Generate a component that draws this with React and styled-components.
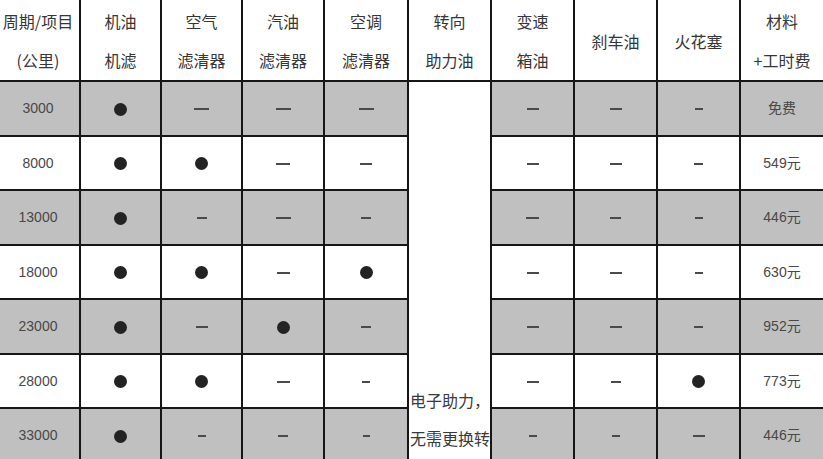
import React from "react";
import styled, { createGlobalStyle } from "styled-components";

const GlobalStyle = createGlobalStyle`
	html, body {
		margin: 0;
		padding: 0;
		background: #ffffff;
		overflow: hidden;
	}
`;

// column widths, border to border (first one runs off the left edge)
const columns = [84, 81, 81, 82, 84, 83, 83, 83, 83, 84];

const headers = [
	["周期/项目", "(公里)"],
	["机油", "机滤"],
	["空气", "滤清器"],
	["汽油", "滤清器"],
	["空调", "滤清器"],
	["转向", "助力油"],
	["变速", "箱油"],
	["刹车油"],
	["火花塞"],
	["材料", "+工时费"],
];

// "o" = dot, a number = dash width in px; the steering column is merged
const rows = [
	{ km: "3000", cells: ["o", 15, 15, 15, 12, 12, 8], price: "免费" },
	{ km: "8000", cells: ["o", "o", 14, 12, 12, 12, 9], price: "549元" },
	{ km: "13000", cells: ["o", 10, 15, 10, 13, 11, 8], price: "446元" },
	{ km: "18000", cells: ["o", "o", 13, "o", 12, 12, 8], price: "630元" },
	{ km: "23000", cells: ["o", 12, "o", 10, 12, 12, 9], price: "952元" },
	{ km: "28000", cells: ["o", "o", 13, 8, 12, 10, "o"], price: "773元" },
	{ km: "33000", cells: ["o", 8, 10, 7, 8, 8, 12], price: "446元" },
];

const Mark = ({ value }) =>
	value === "o" ? <Dot /> : <Dash $w={value} />;

const App = () => {
	return (
		<>
			<GlobalStyle />
			<Frame>
				<Table>
					<colgroup>
						{columns.map((w, i) => (
							<col key={i} style={{ width: w }} />
						))}
					</colgroup>
					<thead>
						<tr>
							{headers.map((lines, i) => (
								<HeadCell key={i}>
									{lines.map((t) => (
										<HeadLine key={t}>{t}</HeadLine>
									))}
								</HeadCell>
							))}
						</tr>
					</thead>
					<tbody>
						{rows.map((row, r) => {
							const shaded = r % 2 === 0;
							const before = row.cells.slice(0, 4);
							const after = row.cells.slice(4);
							return (
								<Row key={row.km}>
									<Cell $shaded={shaded}>
										<Num>{row.km}</Num>
									</Cell>
									{before.map((v, i) => (
										<Cell key={"b" + i} $shaded={shaded}>
											<Mark value={v} />
										</Cell>
									))}
									{r === 0 && (
										<MergedCell rowSpan={rows.length + 1}>
											电子助力，无需更换转向助力油
										</MergedCell>
									)}
									{after.map((v, i) => (
										<Cell key={"a" + i} $shaded={shaded}>
											<Mark value={v} />
										</Cell>
									))}
									<Cell $shaded={shaded}>
										<Num>{row.price}</Num>
									</Cell>
								</Row>
							);
						})}
						{/* the table goes on below the crop */}
						<Row>
							{Array.from({ length: 9 }).map((_, i) => (
								<Cell key={i} $shaded={false} />
							))}
						</Row>
					</tbody>
				</Table>
			</Frame>
		</>
	);
};

export default App;

// ====================== STYLED COMPONENTS ======================

const Frame = styled.div`
	width: 823px;
	height: 459px;
	overflow: hidden;
	background: #ffffff;
`;

const Table = styled.table`
	border-collapse: collapse;
	table-layout: fixed;
	width: 828px;
	margin: 0 0 0 -5px;
	font-family: "Liberation Sans", "Noto Sans CJK SC", sans-serif;
	color: #333333;
`;

const HeadCell = styled.th`
	height: 78px;
	padding: 2px 0 0;
	border: 2px solid #161616;
	border-top: none;
	background: #ffffff;
	font-weight: normal;
	font-size: 16px;
	text-align: center;
	vertical-align: middle;
	font-family: "Noto Sans CJK SC", sans-serif;
	color: #363636;
`;

const HeadLine = styled.div`
	line-height: 39px;
	white-space: nowrap;
`;

const Row = styled.tr`
	height: 54.5px;
`;

const Cell = styled.td`
	padding: 0;
	border: 2px solid #161616;
	background: ${(p) => (p.$shaded ? "#c0c0c0" : "#ffffff")};
	text-align: center;
	vertical-align: middle;
	line-height: 1;
`;

const MergedCell = styled.td`
	padding: 299px 0 0 1px;
	border: 2px solid #161616;
	background: #ffffff;
	vertical-align: top;
	text-align: left;
	font-size: 16px;
	line-height: 38px;
	font-family: "Noto Sans CJK SC", sans-serif;
	color: #3a3a3a;
	word-break: break-all;
`;

const Num = styled.span`
	font-size: 14px;
	color: #484848;
`;

const Dot = styled.span`
	display: inline-block;
	width: 13px;
	height: 13px;
	border-radius: 50%;
	background: #232323;
	vertical-align: middle;
`;

const Dash = styled.span`
	display: inline-block;
	width: ${(p) => p.$w}px;
	height: 2px;
	background: #4a4a4a;
	vertical-align: middle;
`;
